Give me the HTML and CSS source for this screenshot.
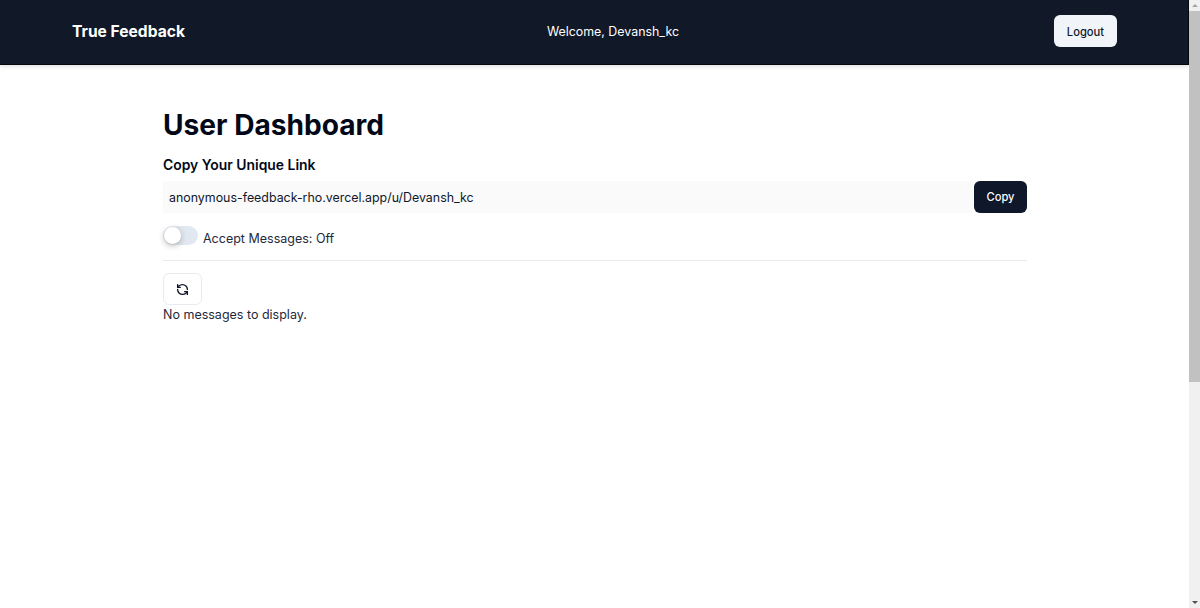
FILE: index.html
```html
<!DOCTYPE html>
<html lang="en">
<head>
<meta charset="utf-8">
<title>True Feedback</title>
<link rel="stylesheet" href="styles.css">
</head>
<body>
<div class="page">
  <nav class="nav">
    <a class="brand">True Feedback</a>
    <span class="welcome">Welcome, Devansh_kc</span>
    <button class="btn btn-light">Logout</button>
  </nav>
  <main class="main">
    <h1 class="title">User Dashboard</h1>
    <h2 class="subtitle">Copy Your Unique Link</h2>
    <div class="link-row">
      <div class="link-input">anonymous-feedback-rho.vercel.app/u/Devansh_kc</div>
      <button class="btn btn-dark">Copy</button>
    </div>
    <div class="switch-row">
      <span class="switch"><span class="thumb"></span></span>
      <span class="switch-label">Accept Messages: Off</span>
    </div>
    <hr class="sep">
    <button class="icon-btn" aria-label="Refresh">
      <svg viewBox="0 0 24 24" fill="none" stroke="#0f172a" stroke-width="2.5" stroke-linecap="round" stroke-linejoin="round"><path d="M21 12a9 9 0 0 0-9-9 9.75 9.75 0 0 0-6.74 2.74L3 8"/><path d="M3 3v5h5"/><path d="M3 12a9 9 0 0 0 9 9 9.75 9.75 0 0 0 6.74-2.74L21 16"/><path d="M16 16h5v5"/></svg>
    </button>
    <p class="empty">No messages to display.</p>
  </main>
</div>
<div class="scrollbar">
  <span class="arrow arrow-up"></span>
  <span class="track"><span class="sb-thumb"></span></span>
  <span class="arrow arrow-down"></span>
</div>
</body>
</html>
```
FILE: styles.css
```css
* { box-sizing: border-box; }
html, body { margin: 0; height: 100%; overflow: hidden; }
body { font-family: Inter, "Liberation Sans", sans-serif; color: #0f172a; background: #fff; }
.page { width: 1189px; }
.nav {
  height: 65px;
  background: #111827;
  color: #fff;
  display: flex;
  align-items: center;
  justify-content: space-between;
  padding: 0 71px 2px 72px;
  border-bottom: 1px solid #05070d;
  border-right: 1px solid #05070d;
  box-shadow: 0 2px 4px rgba(0, 0, 0, .12);
}
.brand { font-size: 15.6px; font-weight: 700; }
.welcome { font-size: 12.4px; margin-right: 13px; }
.btn {
  font-family: inherit;
  font-size: 11.2px;
  font-weight: 500;
  height: 32px;
  border: 0;
  border-radius: 6px;
  padding: 0;
}
.btn-light { width: 63px; padding-top: 1px; background: #f1f5f9; color: #0f172a; }
.btn-dark { width: 53px; background: #0f172a; color: #f8fafc; }
.main { width: 864px; margin-left: 163px; padding-top: 40px; }
.title { margin: 0; font-size: 28.1px; line-height: 40px; font-weight: 700; color: #020817; }
.subtitle { margin: 9px 0 0; font-size: 13.9px; line-height: 22px; font-weight: 600; color: #020817; }
.link-row { display: flex; align-items: center; margin-top: 5px; }
.link-input {
  flex: 1;
  height: 32px;
  margin-right: 1px;
  background: #fafafa;
  font-size: 12.4px;
  line-height: 33px;
  padding-left: 6px;
  color: #0f172a;
}
.switch-row { display: flex; align-items: center; margin-top: 15px; height: 20px; }
.switch { width: 35px; height: 19px; border-radius: 10px; background: #e2e8f0; padding: 1px; display: block; margin-top: -6px; }
.thumb { display: block; width: 17px; height: 17px; border-radius: 50%; background: #fff; box-shadow: 0 2px 6px rgba(0, 0, 0, .25); }
.switch-label { margin-left: 5px; font-size: 12.5px; color: #1e293b; }
.sep { margin: 12px 0; border: 0; height: 1px; background: #e8ebf0; }
.icon-btn {
  display: flex;
  align-items: center;
  justify-content: center;
  width: 39px;
  height: 32px;
  background: #fff;
  border: 1px solid #e8ebf0;
  border-radius: 6px;
  padding: 0;
}
.icon-btn svg { width: 13px; height: 13px; }
.empty { margin: 1px 0 0; font-size: 12.5px; line-height: 18px; color: #1e293b; }
.scrollbar {
  position: fixed;
  top: 0;
  right: 0;
  bottom: 0;
  width: 11px;
  background: #f0f0f0;
  display: flex;
  flex-direction: column;
}
.arrow { height: 11px; flex: none; display: flex; align-items: center; justify-content: center; }
.arrow::before { content: ""; border-left: 3px solid transparent; border-right: 3px solid transparent; }
.arrow-up::before { border-bottom: 3px solid #a3a3a3; }
.arrow-down::before { border-top: 3px solid #505050; }
.track { flex: 1; display: block; }
.sb-thumb { display: block; height: 371px; background: #c1c1c1; }
```
